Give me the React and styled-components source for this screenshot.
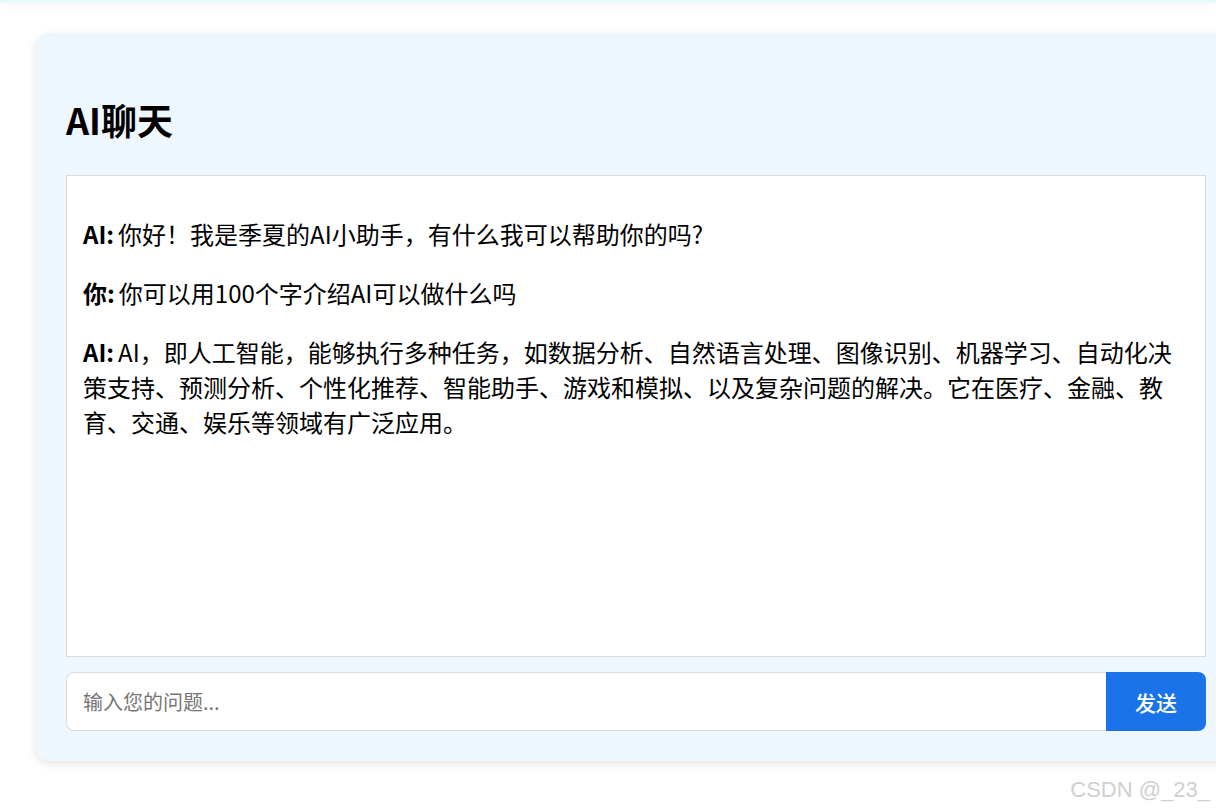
import styled, { createGlobalStyle } from "styled-components";

const GlobalStyle = createGlobalStyle`
  html, body {
    margin: 0;
    padding: 0;
    background: #ffffff;
    overflow: hidden;
  }
  body {
    font-family: "Noto Sans CJK SC", "Noto Sans", sans-serif;
    color: #000;
  }
`;

const Page = styled.div`
  position: relative;
  width: 1216px;
  height: 809px;
  overflow: hidden;
`;

const TopBar = styled.div`
  height: 3px;
  background: #e6f9fc;
  box-shadow: 0 2px 8px rgba(0, 0, 0, 0.08);
`;

const Card = styled.div`
  margin: 30px 0 0 35px;
  width: 1201px;
  box-sizing: border-box;
  padding: 30px 30px 30px 31px;
  background: #eef6fe;
  border-radius: 15px;
  box-shadow: 0 3px 8px rgba(0, 0, 0, 0.1);
`;

const Title = styled.h2`
  margin: 30px 0 30px;
  font-size: 36px;
  font-weight: 700;
  line-height: 52px;
`;

const ChatBox = styled.div`
  height: 482px;
  box-sizing: border-box;
  padding: 16px 16px 0;
  background: #fff;
  border: 1px solid #dcdcdc;
  overflow: hidden;
`;

const Message = styled.p`
  margin: 24px 0 0;
  font-size: 24px;
  line-height: 35px;
`;

const Who = styled.strong`
  font-weight: 700;
  margin-right: 4px;
`;

const InputRow = styled.div`
  display: flex;
  margin-top: 15px;
  height: 59px;
`;

const Input = styled.input`
  flex: 1;
  box-sizing: border-box;
  height: 100%;
  padding: 0 16px;
  font-family: "Noto Sans CJK SC", "Noto Sans", sans-serif;
  font-size: 20px;
  border: 1px solid #dcdcdc;
  border-right: none;
  border-radius: 8px 0 0 8px;
  outline: none;
  &::placeholder {
    color: #767676;
  }
`;

const SendButton = styled.button`
  width: 100px;
  height: 100%;
  border: none;
  border-radius: 0 8px 8px 0;
  background: #1a73e8;
  color: #fff;
  font-family: "Noto Sans CJK SC", "Noto Sans", sans-serif;
  font-size: 21px;
  font-weight: 500;
  cursor: pointer;
`;

const Watermark = styled.div`
  position: absolute;
  right: 6px;
  bottom: 6px;
  font-family: "Liberation Sans", Arial, sans-serif;
  font-size: 22px;
  color: #cfcfcf;
`;

const messages = [
  { who: "AI:", text: "你好！我是季夏的AI小助手，有什么我可以帮助你的吗?" },
  { who: "你:", text: "你可以用100个字介绍AI可以做什么吗" },
  {
    who: "AI:",
    text:
      "AI，即人工智能，能够执行多种任务，如数据分析、自然语言处理、图像识别、机器学习、自动化决策支持、预测分析、个性化推荐、智能助手、游戏和模拟、以及复杂问题的解决。它在医疗、金融、教育、交通、娱乐等领域有广泛应用。",
  },
];

const App = () => {
  return (
    <Page>
      <GlobalStyle />
      <TopBar />
      <Card>
        <Title>AI聊天</Title>
        <ChatBox>
          {messages.map((m, i) => (
            <Message key={i}>
              <Who>{m.who}</Who>
              {m.text}
            </Message>
          ))}
        </ChatBox>
        <InputRow>
          <Input placeholder="输入您的问题..." />
          <SendButton>发送</SendButton>
        </InputRow>
      </Card>
      <Watermark>CSDN @_23_</Watermark>
    </Page>
  );
};

export default App;
